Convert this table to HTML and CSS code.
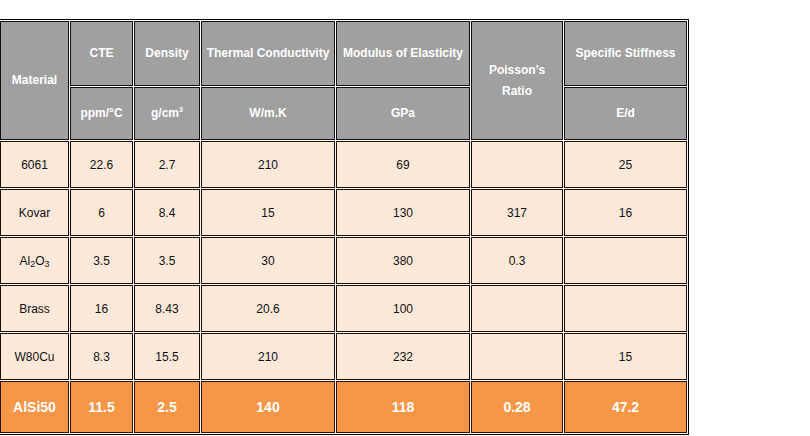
FILE: index.html
```html
<!DOCTYPE html>
<html>
<head>
<meta charset="utf-8">
<link rel="stylesheet" href="styles.css">
</head>
<body>
<table class="spec">
  <thead>
    <tr class="h1">
      <th rowspan="2" class="c-mat">Material</th>
      <th class="c-cte">CTE</th>
      <th class="c-den">Density</th>
      <th class="c-tc">Thermal Conductivity</th>
      <th class="c-mod">Modulus of Elasticity</th>
      <th rowspan="2" class="c-poi">Poisson’s<br>Ratio</th>
      <th class="c-ss">Specific Stiffness</th>
    </tr>
    <tr class="h2">
      <th>ppm/°C</th>
      <th>g/cm<sup>3</sup></th>
      <th>W/m.K</th>
      <th>GPa</th>
      <th>E/d</th>
    </tr>
  </thead>
  <tbody>
    <tr class="row">
      <td>6061</td><td>22.6</td><td>2.7</td><td>210</td><td>69</td><td></td><td>25</td>
    </tr>
    <tr class="row">
      <td>Kovar</td><td>6</td><td>8.4</td><td>15</td><td>130</td><td>317</td><td>16</td>
    </tr>
    <tr class="row">
      <td>Al<sub>2</sub>O<sub>3</sub></td><td>3.5</td><td>3.5</td><td>30</td><td>380</td><td>0.3</td><td></td>
    </tr>
    <tr class="row">
      <td>Brass</td><td>16</td><td>8.43</td><td>20.6</td><td>100</td><td></td><td></td>
    </tr>
    <tr class="row">
      <td>W80Cu</td><td>8.3</td><td>15.5</td><td>210</td><td>232</td><td></td><td>15</td>
    </tr>
    <tr class="row hl">
      <td>AlSi50</td><td>11.5</td><td>2.5</td><td>140</td><td>118</td><td>0.28</td><td>47.2</td>
    </tr>
  </tbody>
</table>
</body>
</html>
```

FILE: styles.css
```css
html, body {
  margin: 0;
  padding: 0;
  background: #ffffff;
}

.spec {
  margin-top: 19px;
  margin-left: -2px;
  width: 691px;
  table-layout: fixed;
  border-collapse: separate;
  border-spacing: 1px;
  border: 1px solid #000;
  font-family: "Liberation Sans", Arial, sans-serif;
}

.spec th,
.spec td {
  box-sizing: border-box;
  padding: 0;
  text-align: center;
  vertical-align: middle;
}

.spec th {
  background: #a0a0a0;
  color: #ffffff;
  font-size: 12px;
  font-weight: bold;
  line-height: 21px;
  border: 1px solid #111;
}

.c-mat { width: 69px; }
.c-cte { width: 63px; }
.c-den { width: 66px; }
.c-tc  { width: 134px; }
.c-mod { width: 134px; }
.c-poi { width: 92px; }
.c-ss  { width: 123px; }

.h1 th { height: 65px; }
.h2 th { height: 53px; }

.spec sup {
  font-size: 7px;
  vertical-align: 5px;
  line-height: 0;
}

.spec td {
  height: 47px;
  background: #fde9d9;
  color: #111;
  font-size: 12px;
  border: 1px solid #1e0c02;
}

.spec sub {
  font-size: 9px;
  vertical-align: -2px;
  line-height: 0;
}

.spec .hl td {
  height: 52px;
  background: #f79646;
  color: #ffffff;
  font-size: 14px;
  font-weight: bold;
  border-color: #2e1000;
}
```
